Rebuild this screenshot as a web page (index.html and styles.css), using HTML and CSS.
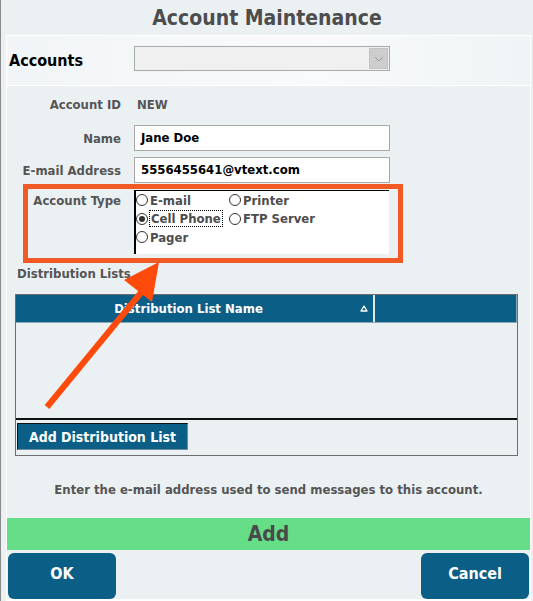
FILE: index.html
```html
<!DOCTYPE html>
<html lang="en">
<head>
    <meta charset="UTF-8">
    <meta name="viewport" content="width=device-width, initial-scale=1.0">
    <title>Account Maintenance</title>
    <link rel="stylesheet" href="styles.css">
</head>
<body>

    <h1 class="title">Account Maintenance</h1>

    <div class="panel">
        <!-- Account picker -->
        <div class="accounts-bar">
            <span class="accounts-label">Accounts</span>
            <div class="select">
                <span class="select-btn">
                    <svg width="10" height="6" viewBox="0 0 10 6"><path d="M1 1 L5 5 L9 1" fill="none" stroke="#9a9a9a" stroke-width="1"/></svg>
                </span>
            </div>
        </div>

        <!-- Account details -->
        <div class="form">
            <div class="row row-id">
                <span class="label">Account ID</span>
                <span class="value">NEW</span>
            </div>
            <div class="row row-name">
                <span class="label">Name</span>
                <div class="input">Jane Doe</div>
            </div>
            <div class="row row-email">
                <span class="label">E-mail Address</span>
                <div class="input">5556455641@vtext.com</div>
            </div>
            <div class="row row-type">
                <span class="label">Account Type</span>
                <div class="radio-box">
                    <label class="radio"><span class="dot"></span>E-mail</label>
                    <label class="radio"><span class="dot"></span>Printer</label>
                    <label class="radio"><span class="dot checked"></span><span class="focus">Cell Phone</span></label>
                    <label class="radio"><span class="dot"></span>FTP Server</label>
                    <label class="radio"><span class="dot"></span>Pager</label>
                </div>
            </div>

            <div class="section-label">Distribution Lists</div>

            <div class="grid">
                <div class="grid-head">
                    <div class="col-name">
                        Distribution List Name
                        <svg class="sort" width="8" height="7" viewBox="0 0 8 7"><path d="M4 1 L7 6 L1 6 Z" fill="none" stroke="#fff" stroke-width="1.4" stroke-linejoin="round"/></svg>
                    </div>
                    <div class="col-extra"></div>
                </div>
                <div class="grid-body"></div>
                <div class="grid-foot">
                    <button class="add-list">Add Distribution List</button>
                </div>
            </div>

            <p class="hint">Enter the e-mail address used to send messages to this account.</p>
        </div>

        <div class="mode-bar">Add</div>

        <div class="actions">
            <button class="action">OK</button>
            <button class="action">Cancel</button>
        </div>
    </div>

    <!-- annotation arrow -->
    <svg class="arrow" width="533" height="601" viewBox="0 0 533 601">
        <line x1="46" y1="407" x2="143" y2="289" stroke="#fe4b0b" stroke-width="6"/>
        <polygon points="158,262 123,280 151,302" fill="#fe4b0b"/>
    </svg>

</body>
</html>
```

FILE: styles.css
```css
/* Global Reset */
* {
    margin: 0;
    padding: 0;
    box-sizing: border-box;
}

body {
    width: 533px;
    height: 601px;
    position: relative;
    overflow: hidden;
    font-family: 'DejaVu Sans Condensed', 'DejaVu Sans', sans-serif;
    font-stretch: condensed;
    font-weight: bold;
    font-size: 13px;
    color: #555;
    background-color: #ebf0f3;
    border-left: 1px solid #8a8a8a;
}

.title {
    height: 35px;
    line-height: 36px;
    text-align: center;
    font-size: 21px;
    color: #4d4d4d;
}

.panel {
    margin-left: 5px;
    width: 525px;
    height: 566px;
    border: 1px solid #fff;
    border-bottom: 2px solid #fff;
    display: flex;
    flex-direction: column;
}

/* Accounts bar */
.accounts-bar {
    height: 50px;
    padding: 10px 0 0 2px;
    display: grid;
    grid-template-columns: 125px 256px;
    align-items: start;
    background: linear-gradient(90deg, #f2f5f7, #f8fafb 60%, #f0f4f6);
    border-bottom: 1px solid #fff;
}

.accounts-label {
    font-size: 16px;
    color: #000;
    line-height: 25px;
    padding-top: 2px;
}

.select {
    height: 25px;
    background-color: #f0f0f0;
    border: 1px solid #a9a9a9;
    display: flex;
    justify-content: flex-end;
    padding: 1px;
}

.select-btn {
    width: 19px;
    background-color: #cdcdcd;
    border: 1px solid #c3c3c3;
    display: flex;
    align-items: center;
    justify-content: center;
}

/* Form */
.form {
    flex: 1;
    padding-top: 8px;
}

.row {
    display: grid;
    grid-template-columns: 114px 256px;
    column-gap: 13px;
    align-items: center;
}

.label {
    text-align: right;
}

.row-id {
    height: 20px;
    margin-bottom: 11px;
}

.value {
    padding-left: 3px;
}

.row-name,
.row-email {
    height: 26px;
}

.row-name {
    margin-bottom: 6px;
}

.row-email {
    margin-bottom: 1px;
}

.input {
    height: 26px;
    line-height: 24px;
    background-color: #fff;
    border: 1px solid #a9a9a9;
    padding-left: 6px;
    color: #000;
}

.row-type {
    margin: 0 0 0 16px;
    width: 380px;
    height: 79px;
    border: 5px solid #f15a24;
    padding: 1px 9px 4px 0;
    grid-template-columns: 93px 255px;
    align-items: start;
}

.row-type .label {
    padding-top: 3px;
}

.radio-box {
    height: 64px;
    background-color: #fff;
    border-left: 2px solid #000;
    border-top: 1px solid #000;
    display: grid;
    grid-template-columns: 93px 1fr;
    grid-auto-rows: 18.5px;
    color: #4d4d4d;
}

.radio {
    display: flex;
    align-items: center;
    gap: 2px;
}

.dot {
    width: 12px;
    height: 12px;
    border: 1px solid #333;
    border-radius: 50%;
    background: #fff;
    display: flex;
    align-items: center;
    justify-content: center;
}

.dot.checked::after {
    content: '';
    width: 6px;
    height: 6px;
    border-radius: 50%;
    background: #333;
}

.focus {
    outline: 1px dotted #000;
    padding: 0 1px;
}

.section-label {
    margin: 3px 0 0 10px;
    line-height: 16px;
}

/* Distribution list grid */
.grid {
    margin: 12px 0 0 8px;
    width: 503px;
    height: 162px;
    border: 1px solid #6e6e6e;
    display: flex;
    flex-direction: column;
}

.grid-head {
    height: 28px;
    display: flex;
    background-color: #0b5f86;
    color: #fff;
    border-bottom: 1px solid #8aa5b5;
}

.col-name {
    width: 359px;
    line-height: 27px;
    text-align: center;
    position: relative;
    border-right: 2px solid #dfe6ea;
    padding-right: 12px;
}

.sort {
    position: absolute;
    right: 5px;
    top: 10px;
}

.col-extra {
    flex: 1;
    border-right: 1px solid #8aa5b5;
}

.grid-body {
    flex: 1;
    border-bottom: 2px solid #111;
}

.grid-foot {
    height: 35px;
    padding: 3px 0 0 1px;
}

.add-list {
    height: 27px;
    width: 171px;
    font: inherit;
    font-size: 14px;
    color: #fff;
    background-color: #0b5f86;
    border: 1px solid #6f8c9b;
    border-left-color: #111;
    border-top-color: #111;
}

.hint {
    margin-top: 26px;
    text-align: center;
}

/* Bottom bar */
.mode-bar {
    height: 32px;
    line-height: 32px;
    text-align: center;
    font-size: 21px;
    color: #4a4a4a;
    background-color: #66de88;
}

.actions {
    display: flex;
    justify-content: space-between;
    padding: 3px 1px 0;
    height: 49px;
}

.action {
    width: 108px;
    height: 46px;
    padding-bottom: 5px;
    border: none;
    border-radius: 6px;
    background-color: #0b5f86;
    color: #fff;
    font: inherit;
    font-size: 16px;
}

.arrow {
    position: absolute;
    left: 0;
    top: 0;
    pointer-events: none;
}
```
